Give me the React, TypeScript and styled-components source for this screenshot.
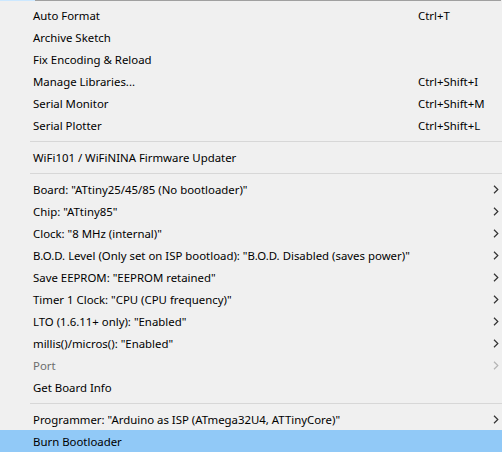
import React from "react";
import styled, { createGlobalStyle } from "styled-components";

const Global = createGlobalStyle`
  html, body { margin: 0; padding: 0; background: #f0f0f0; }
  body { width: 502px; height: 452px; overflow: hidden; }
`;

const Menu = styled.div`
  width: 502px;
  height: 452px;
  background: #f0f0f0;
  display: flex;
  flex-direction: column;
  font-family: "Noto Sans", "Open Sans", sans-serif;
  font-size: 11.4px;
  color: #000;
  overflow: hidden;
`;

const TopEdge = styled.div`
  display: flex;
  height: 1px;
  margin-bottom: 4px;
`;

const HeaderTab = styled.div`
  width: 35px;
  background: #cce8ff;
`;

const EdgeLine = styled.div`
  flex: 1;
  background: #a0a0a0;
  margin-right: 1px;
`;

const Row = styled.div<{ $active?: boolean; $disabled?: boolean }>`
  height: 22px;
  display: flex;
  align-items: center;
  padding-left: 33px;
  background: ${(p) => (p.$active ? "#91c9f7" : "transparent")};
  color: ${(p) => (p.$disabled ? "#6d6d6d" : "#000")};
  white-space: nowrap;
`;

const Label = styled.span`
  flex: 1;
`;

const Shortcut = styled.span`
  width: 68px;
`;

const ArrowCell = styled.span<{ $disabled?: boolean }>`
  width: 16px;
  display: flex;
  align-items: center;
  padding-left: 7px;
  box-sizing: border-box;
  color: ${(p) => (p.$disabled ? "#b4b4b4" : "#333")};
`;

const Separator = styled.div`
  height: 10px;
  display: flex;
  align-items: center;
  padding-left: 30px;
  &::after {
    content: "";
    flex: 1;
    height: 1px;
    background: #d7d7d7;
  }
`;

type Item = {
  label: string;
  shortcut?: string;
  sub?: boolean;
  disabled?: boolean;
  active?: boolean;
};

const Chevron = () => (
  <svg width="6" height="9" viewBox="0 0 6 9">
    <path d="M1 0.8 L4.8 4.5 L1 8.2" fill="none" stroke="currentColor" strokeWidth="1.2" />
  </svg>
);

const MenuRow = ({ item }: { item: Item }) => (
  <Row $active={item.active} $disabled={item.disabled}>
    <Label>{item.label}</Label>
    <Shortcut>{item.shortcut ?? ""}</Shortcut>
    <ArrowCell $disabled={item.disabled}>{item.sub ? <Chevron /> : null}</ArrowCell>
  </Row>
);

const groups: Item[][] = [
  [
    { label: "Auto Format", shortcut: "Ctrl+T" },
    { label: "Archive Sketch" },
    { label: "Fix Encoding & Reload" },
    { label: "Manage Libraries...", shortcut: "Ctrl+Shift+I" },
    { label: "Serial Monitor", shortcut: "Ctrl+Shift+M" },
    { label: "Serial Plotter", shortcut: "Ctrl+Shift+L" },
  ],
  [{ label: "WiFi101 / WiFiNINA Firmware Updater" }],
  [
    { label: 'Board: "ATtiny25/45/85 (No bootloader)"', sub: true },
    { label: 'Chip: "ATtiny85"', sub: true },
    { label: 'Clock: "8 MHz (internal)"', sub: true },
    { label: 'B.O.D. Level (Only set on ISP bootload): "B.O.D. Disabled (saves power)"', sub: true },
    { label: 'Save EEPROM: "EEPROM retained"', sub: true },
    { label: 'Timer 1 Clock: "CPU (CPU frequency)"', sub: true },
    { label: 'LTO (1.6.11+ only): "Enabled"', sub: true },
    { label: 'millis()/micros(): "Enabled"', sub: true },
    { label: "Port", sub: true, disabled: true },
    { label: "Get Board Info" },
  ],
  [
    { label: 'Programmer: "Arduino as ISP (ATmega32U4, ATTinyCore)"', sub: true },
    { label: "Burn Bootloader", active: true },
  ],
];

export default function App() {
  return (
    <>
      <Global />
      <Menu>
        <TopEdge>
          <HeaderTab />
          <EdgeLine />
        </TopEdge>
        {groups.map((g, gi) => (
          <React.Fragment key={gi}>
            {gi > 0 && <Separator />}
            {g.map((it, i) => (
              <MenuRow key={i} item={it} />
            ))}
          </React.Fragment>
        ))}
      </Menu>
    </>
  );
}
